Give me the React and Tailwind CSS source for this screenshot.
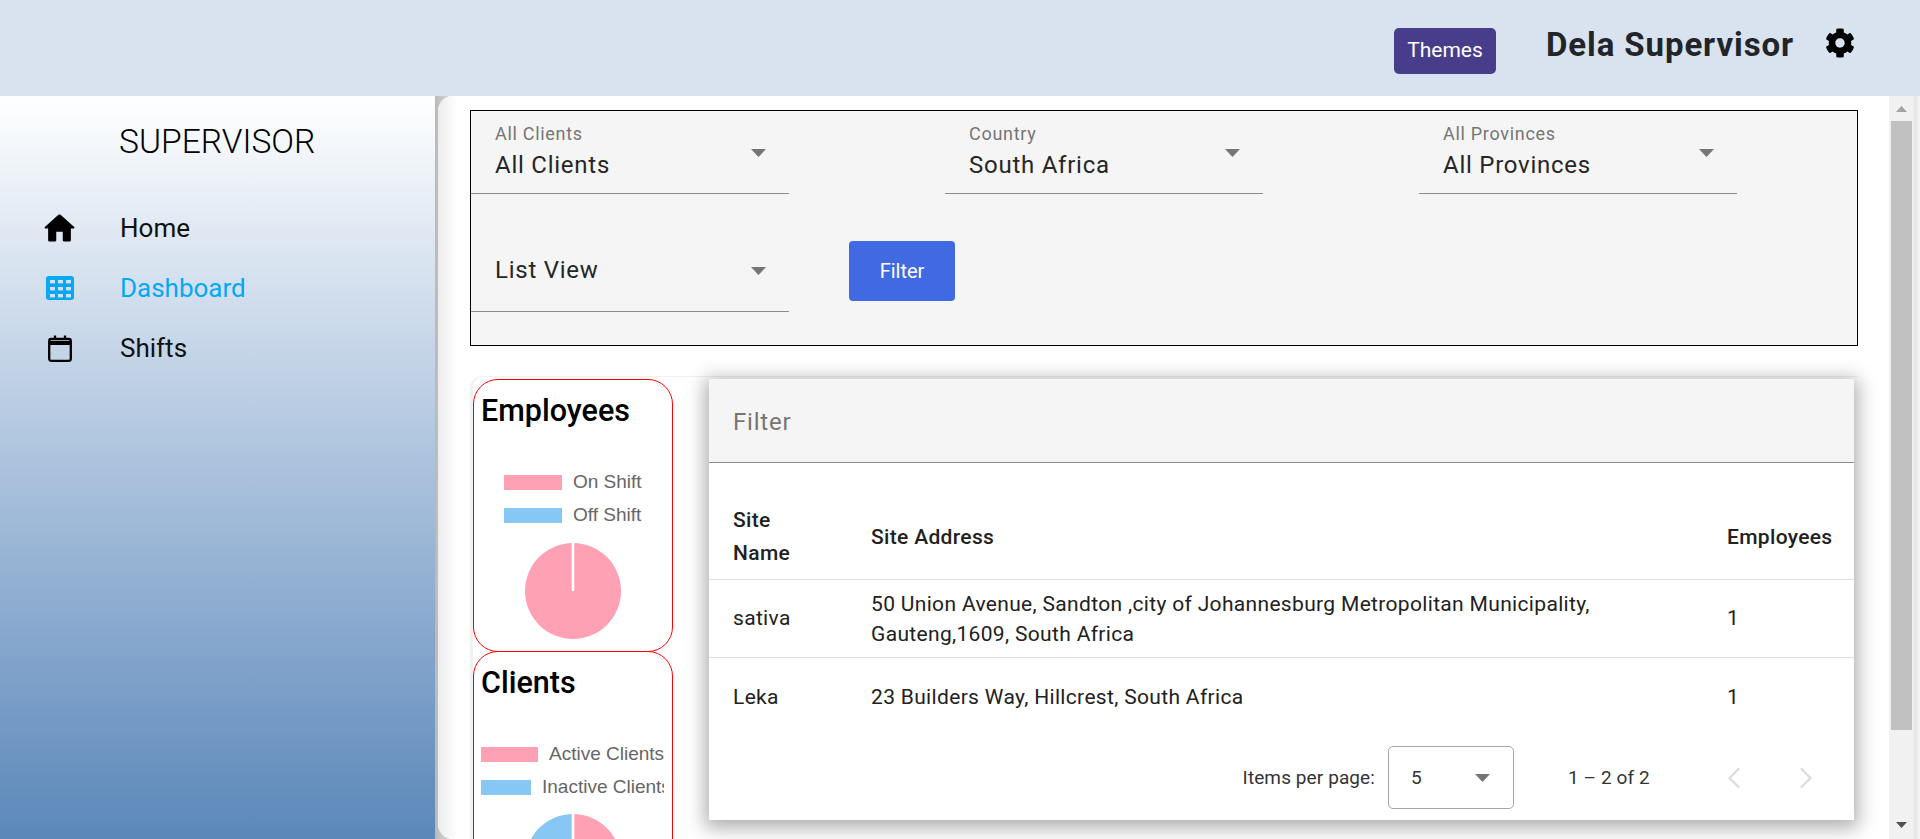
import { ChevronLeft, ChevronRight } from 'lucide-react'
import { FaCog } from 'react-icons/fa'

function Arrow({ className = 'w-[15px] h-[8px]', fill = '#757575' }) {
  return (
    <svg viewBox="0 0 10 5" preserveAspectRatio="none" className={`shrink-0 ${className}`}>
      <path d="M0 0h10L5 5z" fill={fill} />
    </svg>
  )
}

function HomeIcon() {
  return (
    <svg viewBox="0 0 24 24" className="w-[39px] h-[39px]" fill="#000">
      <path d="M10 19v-5h4v5c0 .55.45 1 1 1h3c.55 0 1-.45 1-1v-7h1.7c.46 0 .68-.57.33-.87L12.67 3.6c-.38-.34-.96-.34-1.34 0l-8.36 7.53c-.34.3-.13.87.33.87H5v7c0 .55.45 1 1 1h3c.55 0 1-.45 1-1z" />
    </svg>
  )
}

function GridIcon() {
  const xs = [4, 12, 20]
  const ys = [4, 11, 18]
  return (
    <svg viewBox="0 0 28 24" className="w-[28px] h-[24px]">
      <rect width="28" height="24" rx="3" fill="#03a9f4" />
      {ys.map(y => xs.map(x => (
        <rect key={`${x}-${y}`} x={x} y={y} width="5" height="3.4" fill="#d6e2f0" />
      )))}
    </svg>
  )
}

function CalendarIcon() {
  return (
    <svg viewBox="0 0 24 27" className="w-[24px] h-[27px]" fill="none" stroke="#000">
      <rect x="1.2" y="4" width="21.6" height="21.8" rx="2" strokeWidth="2.3" />
      <path d="M1.2 8h21.6" strokeWidth="4" />
      <path d="M7 0.5v4M17 0.5v4" strokeWidth="2.3" />
    </svg>
  )
}

function NavItem({ icon, label, active }) {
  return (
    <div className="flex items-center h-[60px]">
      <div className="w-[120px] pr-[1px] flex justify-center">
        <div className="w-[39px] h-[39px] flex items-center justify-center">{icon}</div>
      </div>
      <span className={`text-[26px] ${active ? 'text-[#03a9f4]' : 'text-[#111]'}`}>{label}</span>
    </div>
  )
}

function SelectField({ label, value }) {
  return (
    <div className="w-[318px] h-[83px] flex items-center pl-[24px] pr-[23px] border-b border-[#8c8c8c]">
      <div className="flex-1 flex flex-col">
        {label && <span className="text-[18px] leading-[20px] tracking-[0.7px] text-[#757575]">{label}</span>}
        <span className={`text-[24px] leading-[30px] tracking-[0.75px] text-[#262626] ${label ? 'mt-[6px]' : ''}`}>{value}</span>
      </div>
      <Arrow className="w-[15px] h-[8px] mt-[2px]" />
    </div>
  )
}

function Legend({ color, label, boxClass }) {
  return (
    <div className="flex items-center h-[33px] whitespace-nowrap">
      <div className={`h-[15px] shrink-0 ${boxClass}`} style={{ background: color }} />
      <span className="ml-[11px] text-[19px] text-[#666] font-['Liberation_Sans',Arial,sans-serif]">{label}</span>
    </div>
  )
}

const PINK = '#ffa1b5'
const BLUE = '#86c7f3'

function EmployeesPie() {
  return (
    <svg viewBox="0 0 96 96" className="w-[96px] h-[96px] block">
      <circle cx="48" cy="48" r="48" fill={PINK} />
      <path d="M48 48V0" stroke="#fff" strokeWidth="2.6" />
    </svg>
  )
}

function ClientsPie() {
  return (
    <svg viewBox="0 0 96 96" className="w-[96px] h-[96px] block">
      <path d="M48 48V0A48 48 0 0 1 48 96z" fill={PINK} />
      <path d="M48 48V0A48 48 0 0 0 48 96z" fill={BLUE} />
      <path d="M48 0v96" stroke="#fff" strokeWidth="2.6" />
    </svg>
  )
}

function ChartColumn() {
  return (
    <div className="w-[200px] shrink-0 flex flex-col">
      <div className="h-[273px] border border-[#f00] rounded-[25px] pt-[11px] flex flex-col">
        <h3 className="pl-[7px] text-[30.5px] leading-[40px] font-medium text-black">Employees</h3>
        <div className="mt-[35px] pl-[30px]">
          <Legend color={PINK} label="On Shift" boxClass="w-[58px]" />
          <Legend color={BLUE} label="Off Shift" boxClass="w-[58px]" />
        </div>
        <div className="mt-[11px] flex justify-center"><EmployeesPie /></div>
      </div>
      <div className="-mt-px h-[300px] border border-[#f00] rounded-[25px] pt-[11px] flex flex-col">
        <h3 className="pl-[7px] text-[30.5px] leading-[40px] font-medium text-black">Clients</h3>
        <div className="mt-[35px] ml-[7px] w-[183px] overflow-hidden">
          <Legend color={PINK} label="Active Clients" boxClass="w-[57px]" />
          <Legend color={BLUE} label="Inactive Clients" boxClass="w-[50px]" />
        </div>
        <div className="mt-[10px] flex justify-center"><ClientsPie /></div>
      </div>
    </div>
  )
}

function SitesTable() {
  const rows = [
    { name: 'sativa', address: '50 Union Avenue, Sandton ,city of Johannesburg Metropolitan Municipality, Gauteng,1609, South Africa', employees: 1 },
    { name: 'Leka', address: '23 Builders Way, Hillcrest, South Africa', employees: 1 },
  ]
  return (
    <div className="ml-[36px] w-[1145px] h-[441px] bg-white shadow-[0_4px_18px_4px_rgba(0,0,0,0.32)]">
      <div className="h-[84px] pt-[2px] bg-[#f5f5f5] border-b border-[#8c8c8c] flex items-center pl-[24px] text-[24px] tracking-[0.8px] text-[#757575]">
        Filter
      </div>
      <table className="mt-[33px] w-full table-fixed text-[21px] tracking-[0.33px] text-[#212121]">
        <colgroup>
          <col className="w-[162px]" />
          <col className="w-[856px]" />
          <col />
        </colgroup>
        <thead>
          <tr className="h-[83px] border-b border-[#e0e0e0] text-left">
            <th className="pl-[24px] pr-[70px] font-medium leading-[33px] align-middle">Site Name</th>
            <th className="pt-[1px] font-medium">Site Address</th>
            <th className="pt-[1px] font-medium">Employees</th>
          </tr>
        </thead>
        <tbody>
          {rows.map((r, i) => (
            <tr key={r.name} className={`h-[78px] ${i === 0 ? 'border-b border-[#e0e0e0]' : ''}`}>
              <td className="pl-[24px] pt-[2px]">{r.name}</td>
              <td className="pr-[60px] pt-[2px] leading-[30px]">{r.address}</td>
              <td className="pt-[2px]">{r.employees}</td>
            </tr>
          ))}
        </tbody>
      </table>
      <div className="mt-[11px] flex items-center justify-end pr-[30px] text-[19px] tracking-[0.1px] text-[#333]">
        <span className="pt-[2px]">Items per page:</span>
        <div className="ml-[13px] w-[126px] h-[63px] border border-[#a6a6a6] rounded-[5px] flex items-center justify-between pl-[22px] pr-[23px]">
          <span className="pt-[1px]">5</span>
          <Arrow />
        </div>
        <span className="ml-[54px] w-[82px] pt-[2px] whitespace-nowrap">1 – 2 of 2</span>
        <div className="ml-[66px] flex gap-[36px] text-[#dcdcdc]">
          <ChevronLeft size={36} strokeWidth={1.6} />
          <ChevronRight size={36} strokeWidth={1.6} />
        </div>
      </div>
    </div>
  )
}

export default function App() {
  return (
    <div className="h-screen overflow-hidden flex flex-col bg-[#d9e3ef] font-['Roboto',sans-serif]">
      {/* Top bar */}
      <header className="h-[96px] shrink-0 flex items-start justify-end pr-[65px]">
        <button className="mt-[28px] w-[102px] h-[46px] bg-[#483d8b] rounded-[5px] text-white text-[21px]">Themes</button>
        <div className="ml-[50px] mt-[22px] text-[33px] leading-[46px] font-bold tracking-[0.9px] text-[#212529]">Dela Supervisor</div>
        <FaCog className="ml-[31px] mt-[28px] text-black" size={30} />
      </header>

      <div className="flex-1 flex min-h-0">
        {/* Sidebar */}
        <aside className="w-[435px] shrink-0 bg-gradient-to-b from-white to-[#5b87b9]">
          <div className="pl-[119px] pt-[23px] text-[33.6px] leading-[46px] font-light text-black">SUPERVISOR</div>
          <nav className="mt-[33px]">
            <NavItem icon={<HomeIcon />} label="Home" />
            <NavItem icon={<GridIcon />} label="Dashboard" active />
            <NavItem icon={<CalendarIcon />} label="Shifts" />
          </nav>
        </aside>

        {/* Main */}
        <div className="flex-1 min-w-0 flex pl-[3px] bg-[linear-gradient(to_right,#b9b9b9,#e2e2e2_20px)]">
          <main className="flex-1 flex min-w-0 bg-white rounded-l-[15px] overflow-hidden">
            <div className="w-[1451px] shrink-0 pt-[14px] pl-[32px] overflow-hidden bg-[linear-gradient(to_right,#ececec,#ffffff_20px)]">
              <section className="w-[1388px] h-[236px] bg-[#f5f5f5] border border-black">
                <div className="flex gap-[156px]">
                  <SelectField label="All Clients" value="All Clients" />
                  <SelectField label="Country" value="South Africa" />
                  <SelectField label="All Provinces" value="All Provinces" />
                </div>
                <div className="mt-[35px] flex items-start">
                  <SelectField value="List View" />
                  <button className="ml-[60px] mt-[12px] w-[106px] h-[60px] bg-[#4169e1] rounded-[4px] text-white text-[20px]">Filter</button>
                </div>
              </section>

              <section className="mt-[30px] w-[1388px] pt-[2px] flex items-start border-t-[1px] border-l-[3px] border-[#f1f1f1] rounded-tl-[12px]">
                <ChartColumn />
                <SitesTable />
              </section>
            </div>

            {/* Scrollbar */}
            <div className="w-[25px] shrink-0 bg-[#f1f1f1] flex flex-col items-center">
              <div className="h-[25px] flex items-center justify-center">
                <Arrow className="w-[11px] h-[6px] rotate-180" fill="#a3a3a3" />
              </div>
              <div className="w-[21px] h-[609px] bg-[#c1c1c1]" />
              <div className="flex-1 flex items-end pb-[11px]">
                <Arrow className="w-[11px] h-[6px]" fill="#505050" />
              </div>
            </div>
            <div className="flex-1 bg-gradient-to-r from-[#e2e2e2] to-[#f6f6f6]" />
          </main>
        </div>
      </div>
    </div>
  )
}
